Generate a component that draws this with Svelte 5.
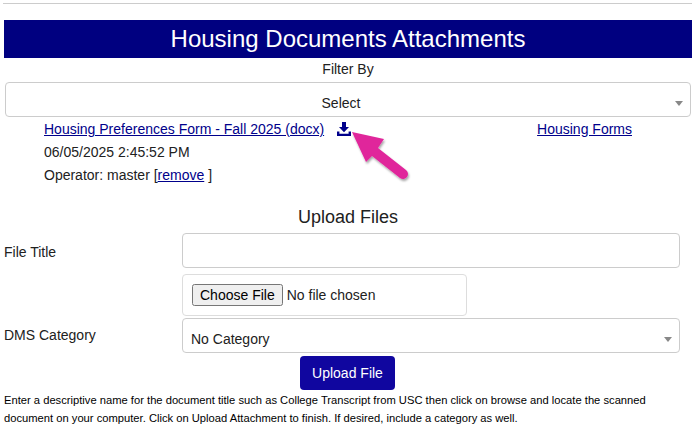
<script lang="ts">
  const title = "Housing Documents Attachments";
  const help =
    "Enter a descriptive name for the document title such as College Transcript from USC then click on browse and locate the scanned document on your computer. Click on Upload Attachment to finish. If desired, include a category as well.";
</script>

<div class="page">
  <hr />
  <h1>{title}</h1>
  <div class="filter-label">Filter By</div>
  <div class="select-wrap filter">
    <select class="select center"><option>Select</option></select>
    <span class="caret"></span>
  </div>

  <section class="doc">
    <div class="doc-main">
      <div class="doc-title">
        <a href="#doc">Housing Preferences Form - Fall 2025 (docx)</a>
        <svg class="download" viewBox="0 0 14 14" width="14" height="14" aria-label="download">
          <path d="M5 0h4v5h3L7 10.2 2 5h3z" fill="#00008b" />
          <path d="M0 9.5h2.4v2.2h9.2V9.5H14V14H0z" fill="#00008b" />
        </svg>
      </div>
      <div class="doc-line">06/05/2025 2:45:52 PM</div>
      <div class="doc-line">Operator: master [<a href="#remove">remove</a> ]</div>
    </div>
    <a class="forms" href="#forms">Housing Forms</a>
    <svg class="arrow" viewBox="0 0 64 60" width="64" height="60">
      <defs>
        <filter id="arrow-shadow" x="-20%" y="-20%" width="150%" height="150%">
          <feDropShadow dx="1" dy="2" stdDeviation="1.2" flood-color="#000" flood-opacity="0.35" />
        </filter>
      </defs>
      <path
        d="M2 2 L34 9 L28 18 L56 40 A5 5 0 0 1 50 48 L22 26 L16 32 Z"
        fill="#e0279b"
        filter="url(#arrow-shadow)"
      />
    </svg>
  </section>

  <h2>Upload Files</h2>

  <div class="form-row title-row">
    <label for="file-title">File Title</label>
    <input id="file-title" class="text" type="text" />
  </div>
  <div class="form-row file-row">
    <span></span>
    <div class="file-box"><input type="file" /></div>
  </div>
  <div class="form-row cat-row">
    <label for="category">DMS Category</label>
    <div class="select-wrap">
      <select id="category" class="select cat"><option>No Category</option></select>
      <span class="caret"></span>
    </div>
  </div>

  <div class="actions"><button type="button">Upload File</button></div>
  <p class="help">{help}</p>
</div>

<style>
  :global(body) {
    margin: 0;
    background: #fff;
  }

  .page {
    height: 429px;
    box-sizing: border-box;
    padding: 3px 5px 0 4px;
    overflow: hidden;
    font-family: "Liberation Sans", Arial, sans-serif;
    font-size: 14px;
    color: #212121;
  }

  hr {
    margin: 0 0 16px -1px;
    border: 0;
    border-top: 1px solid #ccc;
  }

  h1 {
    margin: 0;
    height: 38px;
    background: #000080;
    color: #fff;
    font-size: 24px;
    font-weight: 400;
    line-height: 38px;
    text-align: center;
  }

  .filter-label {
    margin-top: 2px;
    line-height: 18px;
    text-align: center;
  }

  .select-wrap {
    position: relative;
  }

  .filter {
    margin: 4px 1px 0;
  }

  .select {
    display: block;
    width: 100%;
    height: 35px;
    box-sizing: border-box;
    appearance: none;
    border: 1px solid #ccc;
    border-radius: 4px;
    background: #fff;
    color: #212121;
    font: inherit;
  }

  .center {
    padding: 6px 14px 0 0;
    text-align: center;
  }

  .cat {
    padding: 7px 8px 0;
  }

  .caret {
    position: absolute;
    right: 8px;
    top: 19px;
    border-left: 4px solid transparent;
    border-right: 4px solid transparent;
    border-top: 5px solid #888;
  }

  .doc {
    position: relative;
    display: flex;
    justify-content: space-between;
    padding: 3px 60px 0 40px;
  }

  .doc-title {
    display: flex;
    align-items: center;
    gap: 13px;
    height: 18px;
  }

  .doc-line {
    margin-top: 5px;
    line-height: 18px;
  }

  a {
    color: #00008b;
  }

  .forms {
    height: 18px;
    line-height: 18px;
  }

  .arrow {
    position: absolute;
    left: 346px;
    top: 13px;
  }

  h2 {
    margin: 22px 0 0;
    font-size: 18px;
    font-weight: 400;
    line-height: 22px;
    text-align: center;
  }

  .form-row {
    display: grid;
    grid-template-columns: 178px 498px;
  }

  .title-row {
    margin-top: 5px;
    align-items: center;
  }

  .title-row label {
    padding-top: 2px;
  }

  .text {
    height: 35px;
    box-sizing: border-box;
    border: 1px solid #ccc;
    border-radius: 4px;
    background: #fff;
  }

  .file-row {
    margin-top: 6px;
  }

  .file-box {
    width: 285px;
    height: 42px;
    box-sizing: border-box;
    padding: 9px;
    border: 1px solid #ddd;
    border-radius: 4px;
  }

  .file-box input {
    font: inherit;
    color: #212121;
  }

  .cat-row {
    margin-top: 2px;
  }

  .cat-row label {
    padding-top: 9px;
  }

  .actions {
    margin-top: 3px;
    padding-right: 1px;
    display: flex;
    justify-content: center;
  }

  button {
    width: 95px;
    height: 34px;
    border: 0;
    border-radius: 4px;
    background: #10069f;
    color: #fff;
    font: inherit;
  }

  .help {
    margin: 1px 0 0;
    font-size: 11.2px;
    line-height: 18px;
    color: #000;
  }
</style>
